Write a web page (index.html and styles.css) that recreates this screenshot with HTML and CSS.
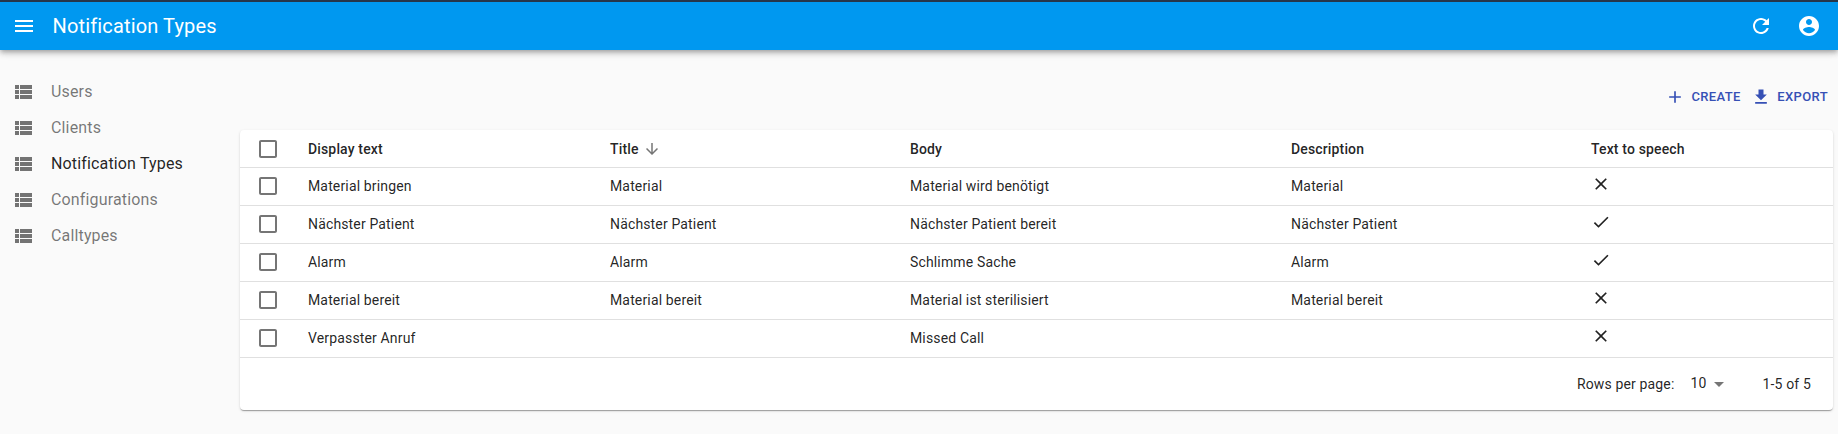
FILE: index.html
```html
<!DOCTYPE html>
<html lang="en">
<head>
<meta charset="utf-8">
<title>Notification Types</title>
<link rel="stylesheet" href="styles.css">
</head>
<body>
<svg class="symbols" aria-hidden="true">
  <symbol id="list" viewBox="0 0 24 24"><path d="M4 14h4v-4H4v4zm0 5h4v-4H4v4zM4 9h4V5H4v4zm5 5h12v-4H9v4zm0 5h12v-4H9v4zM9 5v4h12V5H9z"/></symbol>
  <symbol id="box" viewBox="0 0 24 24"><path d="M19 5v14H5V5h14m0-2H5c-1.100 0-2 .9-2 2v14c0 1.100.9 2 2 2h14c1.100 0 2-.9 2-2V5c0-1.100-.9-2-2-2z"/></symbol>
  <symbol id="no" viewBox="0 0 24 24"><path d="M19 6.410L17.590 5 12 10.590 6.410 5 5 6.410 10.590 12 5 17.590 6.410 19 12 13.410 17.590 19 19 17.590 13.410 12z"/></symbol>
  <symbol id="yes" viewBox="0 0 24 24"><path d="M9 16.200L4.800 12l-1.400 1.400L9 19 21 7l-1.400-1.400L9 16.200z"/></symbol>
</svg>
<header class="appbar">
  <svg class="icon" viewBox="0 0 24 24"><path d="M3 18h18v-2H3v2zm0-5h18v-2H3v2zm0-7v2h18V6H3z"/></svg>
  <h1 class="appbar-title">Notification Types</h1>
  <svg class="icon" viewBox="0 0 24 24"><path d="M17.650 6.350C16.200 4.900 14.210 4 12 4c-4.420 0-7.990 3.580-7.990 8s3.570 8 7.990 8c3.730 0 6.840-2.550 7.730-6h-2.080c-.82 2.330-3.040 4-5.650 4-3.310 0-6-2.690-6-6s2.690-6 6-6c1.660 0 3.140.69 4.220 1.780L13 11h7V4l-2.350 2.350z"/></svg>
  <svg class="icon" viewBox="0 0 24 24"><path d="M12 2C6.480 2 2 6.480 2 12s4.480 10 10 10 10-4.480 10-10S17.520 2 12 2zm0 3c1.660 0 3 1.340 3 3s-1.340 3-3 3-3-1.340-3-3 1.340-3 3-3zm0 14.200c-2.500 0-4.710-1.280-6-3.220.03-1.990 4-3.080 6-3.080 1.990 0 5.970 1.090 6 3.080-1.290 1.940-3.500 3.220-6 3.220z"/></svg>
</header>
<div class="layout">
  <nav class="sidebar">
    <a class="nav-item"><svg class="icon"><use href="#list"/></svg>Users</a>
    <a class="nav-item"><svg class="icon"><use href="#list"/></svg>Clients</a>
    <a class="nav-item active"><svg class="icon"><use href="#list"/></svg>Notification Types</a>
    <a class="nav-item"><svg class="icon"><use href="#list"/></svg>Configurations</a>
    <a class="nav-item"><svg class="icon"><use href="#list"/></svg>Calltypes</a>
  </nav>
  <main class="content">
    <div class="toolbar">
      <a class="button"><svg class="icon small" viewBox="0 0 24 24"><path d="M19 13h-6v6h-2v-6H5v-2h6V5h2v6h6v2z"/></svg>Create</a>
      <a class="button"><svg class="icon small" viewBox="0 0 24 24"><path d="M19 9h-4V3H9v6H5l7 7 7-7zM5 18v2h14v-2H5z"/></svg>Export</a>
    </div>
    <section class="card">
      <table class="grid">
        <colgroup><col class="c-check"><col class="c-display"><col class="c-title"><col class="c-body"><col class="c-desc"><col></colgroup>
        <thead>
          <tr><th class="check"><svg class="icon"><use href="#box"/></svg></th><th>Display text</th><th><span class="sort">Title<svg class="icon sort-icon" viewBox="0 0 24 24"><path d="M20 12l-1.410-1.410L13 16.170V4h-2v12.170l-5.580-5.590L4 12l8 8 8-8z"/></svg></span></th><th>Body</th><th>Description</th><th>Text to speech</th></tr>
        </thead>
        <tbody>
          <tr><td class="check"><svg class="icon"><use href="#box"/></svg></td><td>Material bringen</td><td>Material</td><td>Material wird benötigt</td><td>Material</td><td class="flag"><svg class="icon small"><use href="#no"/></svg></td></tr>
          <tr><td class="check"><svg class="icon"><use href="#box"/></svg></td><td>Nächster Patient</td><td>Nächster Patient</td><td>Nächster Patient bereit</td><td>Nächster Patient</td><td class="flag"><svg class="icon small"><use href="#yes"/></svg></td></tr>
          <tr><td class="check"><svg class="icon"><use href="#box"/></svg></td><td>Alarm</td><td>Alarm</td><td>Schlimme Sache</td><td>Alarm</td><td class="flag"><svg class="icon small"><use href="#yes"/></svg></td></tr>
          <tr><td class="check"><svg class="icon"><use href="#box"/></svg></td><td>Material bereit</td><td>Material bereit</td><td>Material ist sterilisiert</td><td>Material bereit</td><td class="flag"><svg class="icon small"><use href="#no"/></svg></td></tr>
          <tr><td class="check"><svg class="icon"><use href="#box"/></svg></td><td>Verpasster Anruf</td><td></td><td>Missed Call</td><td></td><td class="flag"><svg class="icon small"><use href="#no"/></svg></td></tr>
        </tbody>
      </table>
      <footer class="pagination">
        <span>Rows per page:</span>
        <span class="select"><span class="select-value">10</span><svg class="icon" viewBox="0 0 24 24"><path d="M7 10l5 5 5-5z"/></svg></span>
        <span>1-5 of 5</span>
      </footer>
    </section>
  </main>
</div>
</body>
</html>
```
FILE: styles.css
```css
* { box-sizing: border-box; }
body {
  margin: 0;
  height: 434px;
  overflow: hidden;
  background: #fafafa;
  color: rgba(0, 0, 0, 0.87);
  font: 400 14px/20px Roboto, sans-serif;
  letter-spacing: 0.01071em;
}
.symbols { display: none; }
.icon { display: block; width: 24px; height: 24px; flex: none; fill: currentColor; }
.icon.small { width: 20px; height: 20px; }

.appbar {
  display: flex;
  align-items: center;
  height: 50px;
  padding: 0 17px 0 12px;
  gap: 24px;
  border-top: 2px solid #26364a;
  background: #0098f0;
  color: #fff;
  box-shadow: 0 2px 4px -1px rgba(0, 0, 0, 0.2), 0 4px 5px rgba(0, 0, 0, 0.14), 0 1px 10px rgba(0, 0, 0, 0.12);
}
.appbar-title {
  flex: 1;
  margin: 0 0 0 -8px;
  padding-left: 0.5px;
  font-size: 20px;
  font-weight: 400;
  line-height: 32px;
  letter-spacing: 0.0075em;
}

.layout { display: flex; }
.sidebar { width: 240px; padding-top: 24px; }
.nav-item {
  display: flex;
  align-items: center;
  gap: 16px;
  height: 36px;
  padding-left: 11px;
  color: rgba(0, 0, 0, 0.54);
  font-size: 16px;
  line-height: 24px;
  letter-spacing: 0.00938em;
}
.nav-item.active { color: rgba(0, 0, 0, 0.87); }
.nav-item .icon { color: rgba(0, 0, 0, 0.54); }

.content { flex: 1; padding-right: 5px; }
.toolbar {
  display: flex;
  justify-content: flex-end;
  gap: 10.5px;
  height: 80px;
  padding: 34px 5px 0 0;
}
.button {
  display: flex;
  align-items: center;
  gap: 6px;
  height: 26px;
  color: #3650b5;
  font-size: 13px;
  font-weight: 500;
  line-height: 22px;
  letter-spacing: 0.02857em;
  text-transform: uppercase;
}

.card {
  height: 280px;
  border-radius: 4px;
  background: #fff;
  box-shadow: 0 2px 1px -1px rgba(0, 0, 0, 0.2), 0 1px 1px rgba(0, 0, 0, 0.14), 0 1px 3px rgba(0, 0, 0, 0.12);
}
.grid { width: 100%; table-layout: fixed; border-collapse: separate; border-spacing: 0; }
.c-check { width: 62px; }
.c-display { width: 302px; }
.c-title { width: 300px; }
.c-body { width: 381px; }
.c-desc { width: 300px; }
th, td {
  height: 38px;
  padding: 0 6px;
  border-bottom: 1px solid #e0e0e0;
  text-align: left;
  vertical-align: middle;
}
th { font-weight: 500; }
td { padding-bottom: 1px; }
.check { padding: 0 0 0 16px; }
td.check { padding-bottom: 1px; }
.check .icon { color: rgba(0, 0, 0, 0.54); }
.flag { padding-bottom: 5px; }
.sort { display: flex; align-items: center; }
.sort-icon { width: 18px; height: 18px; margin-left: 4px; color: rgba(0, 0, 0, 0.54); }

.pagination {
  display: flex;
  align-items: center;
  justify-content: flex-end;
  height: 52px;
  padding-right: 22px;
}
.select { display: flex; align-items: center; margin: -1px 32px 0 16px; }
.select-value { padding-bottom: 2px; }
.select .icon { color: rgba(0, 0, 0, 0.54); }
```
